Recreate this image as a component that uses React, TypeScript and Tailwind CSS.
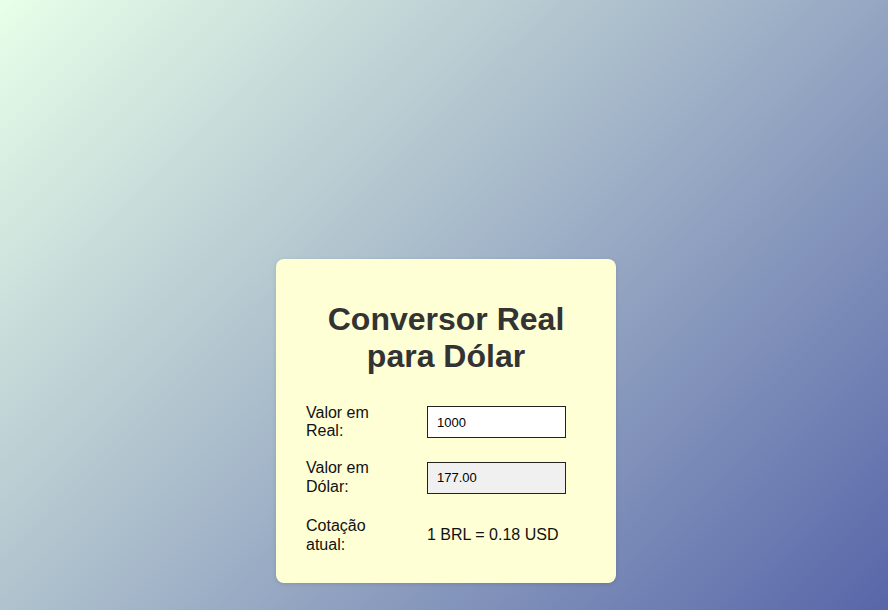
export default function App() {
  return (
    <div
      className="flex min-h-screen items-start justify-center pt-[259px] pl-[4px] bg-[linear-gradient(135deg,#e8ffe9_0%,#a9bccb_45%,#5866a9_100%)]"
      style={{ fontFamily: '"Liberation Sans", Arial, sans-serif' }}
    >
      <div className="w-[340px] rounded-lg bg-[#ffffd6] px-[30px] pt-[42px] pb-[29px] shadow-[0_1px_4px_rgba(0,0,0,0.12)]">
        <h1 className="text-center text-[32px] font-bold leading-[36.8px] text-[#333]">
          Conversor Real
          <br />
          para Dólar
        </h1>

        <div className="mt-[29px] flex flex-col gap-[19px] text-[16px] leading-[18.4px] text-[#111]">
          <div className="flex items-center">
            <label className="w-[121px] pr-[20px]">Valor em Real:</label>
            <input
              defaultValue="1000"
              className="h-[32px] w-[139px] border border-[#222] bg-white px-[9px] text-[13px] text-black outline-none"
            />
          </div>
          <div className="flex items-center">
            <label className="w-[121px] pr-[20px]">Valor em Dólar:</label>
            <input
              readOnly
              value="177.00"
              className="h-[32px] w-[139px] border border-[#222] bg-[#f0f0f0] px-[9px] text-[13px] text-black outline-none"
            />
          </div>
          <div className="mt-[2px] flex items-center">
            <span className="w-[121px] pr-[20px]">Cotação atual:</span>
            <span>1 BRL = 0.18 USD</span>
          </div>
        </div>
      </div>
    </div>
  );
}
